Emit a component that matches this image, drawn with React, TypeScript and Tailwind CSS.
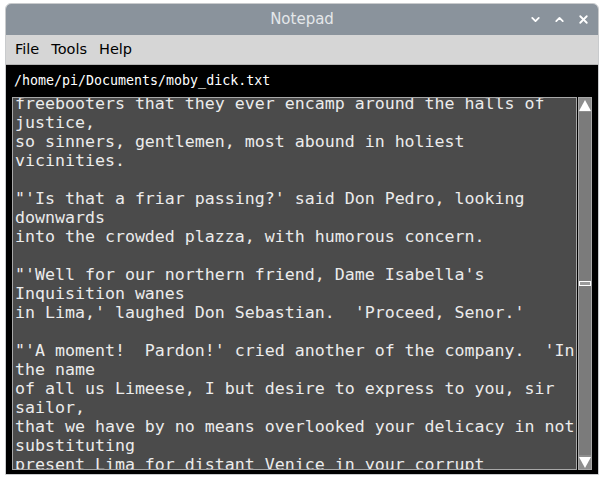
import { ChevronDown, ChevronUp, X } from 'lucide-react';

const lines = [
  'freebooters that they ever encamp around the halls of',
  'justice,',
  'so sinners, gentlemen, most abound in holiest',
  'vicinities.',
  '',
  "\"'Is that a friar passing?' said Don Pedro, looking",
  'downwards',
  'into the crowded plazza, with humorous concern.',
  '',
  "\"'Well for our northern friend, Dame Isabella's",
  'Inquisition wanes',
  "in Lima,' laughed Don Sebastian.  'Proceed, Senor.'",
  '',
  "\"'A moment!  Pardon!' cried another of the company.  'In",
  'the name',
  'of all us Limeese, I but desire to express to you, sir',
  'sailor,',
  'that we have by no means overlooked your delicacy in not',
  'substituting',
  'present Lima for distant Venice in your corrupt',
];

export default function App() {
  return (
    <div className="w-[605px] h-[481px] bg-white pt-[3px] pl-[5px] pr-[6px] pb-[6px]">
      <div className="flex flex-col h-full border border-[#c9cbcd] rounded-t-[6px] overflow-hidden">
        {/* title bar */}
        <div className="relative flex items-center justify-center h-[31px] bg-[#8a939c] shrink-0">
          <span className="text-[15px] text-[#e4e7ea] font-['DejaVu_Sans',sans-serif]">Notepad</span>
          <div className="absolute right-[8px] top-0 h-full flex items-center gap-[11px] text-white">
            <ChevronDown size={13} strokeWidth={3.4} />
            <ChevronUp size={13} strokeWidth={3.4} />
            <X size={13} strokeWidth={3.4} />
          </div>
        </div>
        {/* menu */}
        <div className="flex items-center gap-[12px] h-[30px] pl-[9px] bg-[#d6d6d6] border-b border-[#b4b4b4] shrink-0 text-[14.5px] text-black font-['DejaVu_Sans',sans-serif]">
          <span>File</span>
          <span>Tools</span>
          <span>Help</span>
        </div>
        {/* body */}
        <div className="flex flex-col flex-1 min-h-0 bg-black px-[6px] pb-[4px]">
          <div className="h-[32px] shrink-0 flex items-center pl-[2px] text-[13.3px] text-white font-['DejaVu_Sans_Mono',monospace]">
            /home/pi/Documents/moby_dick.txt
          </div>
          <div className="flex flex-1 min-h-0 gap-[1px]">
            <div className="flex-1 min-w-0 overflow-hidden bg-[#4b4b4b] border border-[#a8a8a8]">
              <div className="-mt-[4px] pl-[2px] text-[16.6px] leading-[19px] text-[#ececec] font-['DejaVu_Sans_Mono',monospace] whitespace-pre">
                {lines.map((l, i) => (
                  <div key={i} className="h-[19px]">{l}</div>
                ))}
              </div>
            </div>
            <div className="w-[14px] shrink-0 flex flex-col bg-[#7b7b7b] border border-[#a8a8a8]">
              <div className="h-[14px] flex items-center justify-center bg-[#8e8e8e]">
                <div className="w-0 h-0 border-l-[6px] border-r-[6px] border-b-[11px] border-l-transparent border-r-transparent border-b-white" />
              </div>
              <div className="flex-1" />
              <div className="h-[5px] bg-[#9a9a9a] border border-white" />
              <div className="flex-1" />
              <div className="h-[14px] flex items-center justify-center bg-[#8e8e8e]">
                <div className="w-0 h-0 border-l-[6px] border-r-[6px] border-t-[11px] border-l-transparent border-r-transparent border-t-white" />
              </div>
            </div>
          </div>
        </div>
      </div>
    </div>
  );
}
